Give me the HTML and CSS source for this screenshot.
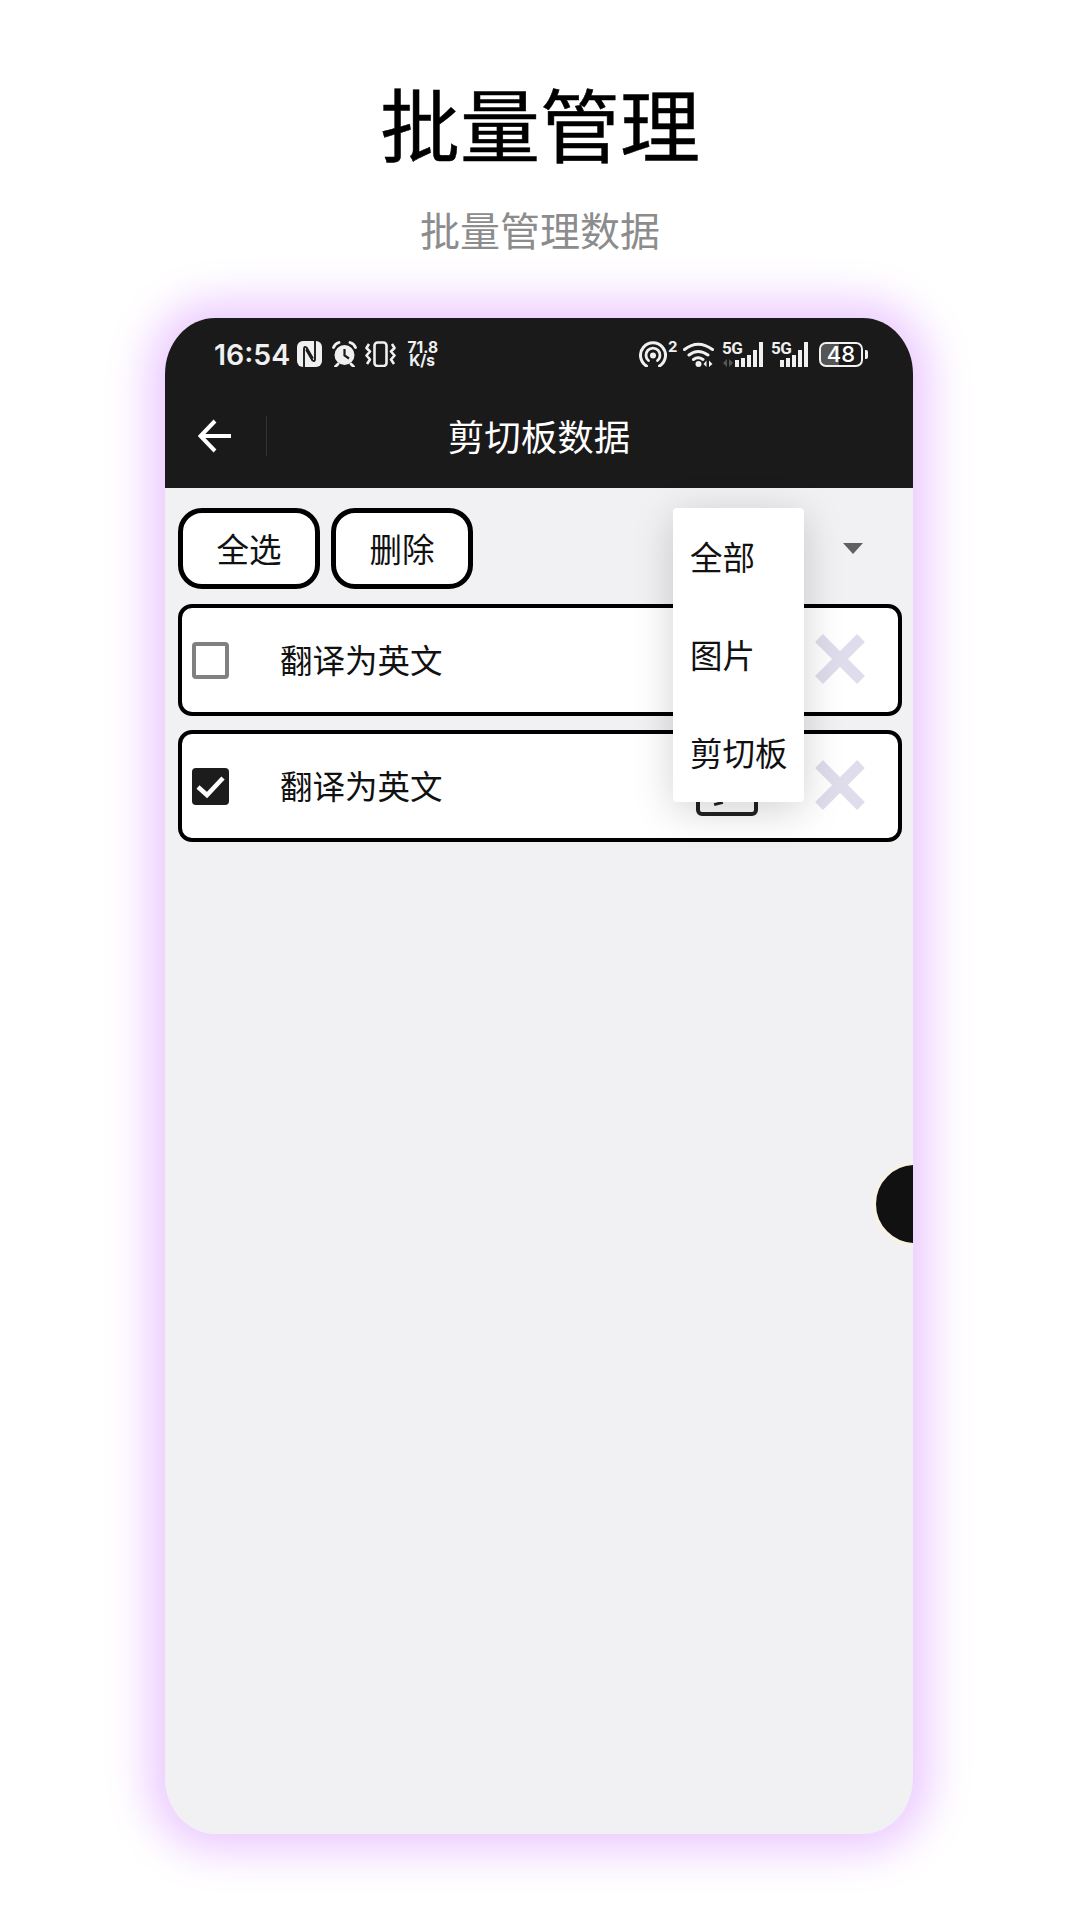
FILE: index.html
```html
<!DOCTYPE html>
<html lang="zh-CN">
<head>
<meta charset="utf-8">
<title>批量管理</title>
<link rel="stylesheet" href="styles.css">
</head>
<body>
<main class="page">
  <h1 class="headline">批量管理</h1>
  <p class="subhead">批量管理数据</p>
  <section class="phone">
    <header class="statusbar">
      <div class="status-group">
        <span class="clock">16:54</span>
        <svg class="ic ic-nfc" viewBox="0 0 25 26"><rect width="25" height="26" rx="6" fill="#f0f0f0"/><path d="M7 26V8Q7 5 9.500 6.500L16 17.500" fill="none" stroke="#1a1a1a" stroke-width="1.900"/><path d="M18 0V18Q18 21 15.500 19.500L9 8.500" fill="none" stroke="#1a1a1a" stroke-width="1.900"/></svg>
        <svg class="ic ic-alarm" viewBox="0 0 25 26"><circle cx="12.500" cy="14" r="10" fill="#f0f0f0"/><path d="M12.500 8V14.500L17 17.500" fill="none" stroke="#1a1a1a" stroke-width="2.200"/><path d="M1.500 6.500Q3 2.500 7 1.500M23.500 6.500Q22 2.500 18 1.500M6 23L3.500 25.500M19 23L21.500 25.500" fill="none" stroke="#f0f0f0" stroke-width="2.800" stroke-linecap="round"/></svg>
        <svg class="ic ic-vibrate" viewBox="0 0 31 26"><rect x="9.500" y="1.500" width="12" height="23.500" rx="3" fill="none" stroke="#f0f0f0" stroke-width="2.600"/><path d="M4 3L1.500 7L5 10.500L1.500 14.500L5 18.500L2 23M27 3L29.500 7L26 10.500L29.500 14.500L26 18.500L29 23" fill="none" stroke="#f0f0f0" stroke-width="2.600" stroke-linejoin="round"/></svg>
        <span class="speed"><span>71.8</span><span class="speed-unit">K/s</span></span>
      </div>
      <div class="status-group status-right">
        <svg class="ic ic-hotspot" viewBox="0 0 29 26"><path d="M7.500 25A12.500 12.500 0 1 1 20.500 25" fill="none" stroke="#f0f0f0" stroke-width="3" stroke-linecap="round"/><path d="M9.500 19.500A7 7 0 1 1 18.500 19.500" fill="none" stroke="#f0f0f0" stroke-width="2.800" stroke-linecap="round"/><circle cx="14" cy="14.500" r="3" fill="#f0f0f0"/></svg>
        <span class="sup">2</span>
        <svg class="ic ic-wifi" viewBox="0 0 32 26"><path d="M1.500 8.500Q15 -2 29.500 8.500M6 14Q15 7 25 14M10.500 18.500Q15 15 20 18.500" fill="none" stroke="#f0f0f0" stroke-width="3" stroke-linecap="round"/><circle cx="15.500" cy="23" r="3" fill="#f0f0f0"/><path d="M23.500 19.500V26L20.500 23ZM26 19.500V26L29.500 23Z" fill="#f0f0f0"/></svg>
        <span class="signal signal-a">
          <span class="fiveg">5G</span>
          <svg class="ic" viewBox="0 0 41 26"><path d="M5 18V26L1 22ZM7 18V26L11 22Z" fill="#555"/><rect x="13" y="19" width="4" height="7" fill="#f0f0f0"/><rect x="19" y="17" width="4" height="9" fill="#f0f0f0"/><rect x="25" y="14" width="4" height="12" fill="#f0f0f0"/><rect x="31" y="9" width="4" height="17" fill="#f0f0f0"/><rect x="37" y="1" width="4" height="25" fill="#f0f0f0"/></svg>
        </span>
        <span class="signal signal-b">
          <span class="fiveg">5G</span>
          <svg class="ic" viewBox="0 0 37 26"><rect x="9" y="19" width="4" height="7" fill="#f0f0f0"/><rect x="15" y="17" width="4" height="9" fill="#f0f0f0"/><rect x="21" y="14" width="4" height="12" fill="#f0f0f0"/><rect x="27" y="9" width="4" height="17" fill="#f0f0f0"/><rect x="33" y="1" width="4" height="25" fill="#f0f0f0"/></svg>
        </span>
        <span class="battery">48</span><span class="battery-tip"></span>
      </div>
    </header>
    <nav class="toolbar">
      <div class="toolbar-lead">
        <svg class="back" viewBox="0 0 34 34"><path d="M33 17H3M17 2L2.500 17L17 32" fill="none" stroke="#fff" stroke-width="4"/></svg>
        <span class="divider"></span>
      </div>
      <div class="toolbar-title">剪切板数据</div>
    </nav>
    <div class="content">
      <div class="actions">
        <button class="btn">全选</button>
        <button class="btn">删除</button>
        <span class="caret"></span>
      </div>
      <ul class="list">
        <li class="row">
          <span class="check"></span>
          <span class="row-text">翻译为英文</span>
          <span class="row-tool"></span>
          <svg class="close" viewBox="0 0 50 50"><path d="M4 4L46 46M46 4L4 46" stroke="#dfddeb" stroke-width="11"/></svg>
        </li>
        <li class="row">
          <span class="check checked"><svg viewBox="0 0 37 37"><path d="M6 19L15 27L31 10" fill="none" stroke="#fff" stroke-width="4.500"/></svg></span>
          <span class="row-text">翻译为英文</span>
          <span class="row-tool"></span>
          <svg class="close" viewBox="0 0 50 50"><path d="M4 4L46 46M46 4L4 46" stroke="#dfddeb" stroke-width="11"/></svg>
        </li>
      </ul>
      <div class="menu">
        <div class="menu-item">全部</div>
        <div class="menu-item">图片</div>
        <div class="menu-item">剪切板</div>
      </div>
      <div class="fab"></div>
    </div>
  </section>
</main>
</body>
</html>
```
FILE: styles.css
```css
* { box-sizing: border-box; }
html, body { margin: 0; padding: 0; background: #fff; }
body {
  width: 1080px;
  height: 1920px;
  overflow: hidden;
  font-family: "Noto Sans CJK SC", "Noto Sans", sans-serif;
}
.page { display: flex; flex-direction: column; align-items: center; }
.headline {
  margin: 62px 0 0;
  height: 118px;
  font-size: 80px;
  line-height: 118px;
  font-weight: 400;
  -webkit-text-stroke: 0.5px #000;
  color: #000;
}
.subhead {
  margin: 19px 0 0;
  height: 60px;
  font-size: 40px;
  line-height: 60px;
  color: #8c8c8c;
}
.phone {
  align-self: flex-start;
  margin: 59px 0 0 165px;
  width: 748px;
  height: 1516px;
  display: flex;
  flex-direction: column;
  border-radius: 50px / 56px;
  background: #f1f1f4;
  box-shadow: 0 0 44px 16px #ebc8ff;
  overflow: hidden;
}
.statusbar {
  height: 72px;
  flex: none;
  padding: 0 45px 0 49px;
  display: flex;
  align-items: center;
  justify-content: space-between;
  background: #1a1a1a;
  color: #f0f0f0;
  font-family: Inter, "Noto Sans", sans-serif;
}
.status-group { display: flex; align-items: center; }
.clock { font-size: 28.500px; font-weight: 600; letter-spacing: 0; width: 83px; white-space: nowrap; }
.ic { display: block; height: 26px; flex: none; }
.ic-nfc { width: 25px; }
.ic-alarm { width: 25px; margin-left: 10px; }
.ic-vibrate { width: 31px; margin-left: 8px; }
.speed {
  margin-left: 8px;
  width: 34px;
  display: flex;
  flex-direction: column;
  align-items: flex-end;
  font-size: 15.500px;
  line-height: 13px;
  font-weight: 700;
}
.speed-unit { margin-right: 3px; }
.ic-hotspot { width: 29px; }
.sup {
  width: 9px;
  align-self: flex-start;
  margin-top: -3px;
  font-size: 15px;
  line-height: 18px;
  font-weight: 700;
}
.ic-wifi { width: 32px; margin-left: 6px; }
.signal { position: relative; display: block; flex: none; }
.signal-a { width: 41px; margin-left: 7px; }
.signal-b { width: 37px; margin-left: 8px; }
.signal .ic { width: 100%; }
.fiveg {
  position: absolute;
  left: 0;
  top: -2px;
  font: 700 17px/18px Roboto, sans-serif;
  letter-spacing: -0.5px;
  color: #f0f0f0;
}
.battery {
  margin-left: 11px;
  width: 44px;
  height: 25px;
  border: 2px solid #f0f0f0;
  border-radius: 7px;
  background: linear-gradient(90deg, #555 46%, transparent 46%);
  font-size: 22px;
  font-weight: 500;
  line-height: 21px;
  text-align: center;
  color: #fff;
}
.battery-tip {
  margin-left: 2px;
  width: 3px;
  height: 9px;
  border-radius: 0 2px 2px 0;
  background: #f0f0f0;
}
.toolbar {
  height: 98px;
  flex: none;
  padding-bottom: 6px;
  display: grid;
  grid-template-columns: 102px 1fr 102px;
  align-items: center;
  background: #1a1a1a;
}
.toolbar-lead { display: flex; align-items: center; padding-left: 33px; }
.back { width: 34px; height: 34px; display: block; }
.divider { margin-left: 34px; width: 1px; height: 40px; background: #333; }
.toolbar-title {
  font-size: 36.500px;
  line-height: 50px;
  color: #fff;
  text-align: center;
}
.content { position: relative; flex: 1; padding: 20px 11px 0 13px; }
.actions { display: flex; align-items: center; gap: 11px; }
.btn {
  width: 142px;
  height: 81px;
  border: 5px solid #000;
  border-radius: 24px;
  background: #fff;
  font: 400 32.500px/44px "Noto Sans CJK SC", sans-serif;
  color: #111;
  padding: 0 0 2px;
}
.caret {
  margin-left: auto;
  margin-right: 39px;
  width: 0;
  height: 0;
  border-left: 10px solid transparent;
  border-right: 10px solid transparent;
  border-top: 11px solid #606060;
}
.list { margin: 15px 0 0; padding: 0; list-style: none; display: flex; flex-direction: column; gap: 14px; }
.row {
  height: 112px;
  padding: 0 33px 0 10px;
  display: flex;
  align-items: center;
  border: 4px solid #000;
  border-radius: 14px;
  background: #fff;
}
.check {
  width: 37px;
  height: 37px;
  flex: none;
  border: 4px solid #808080;
  border-radius: 4px;
  background: #fff;
}
.check.checked { border: 0; background: #1c1c1c; }
.check svg { display: block; width: 37px; height: 37px; }
.row-text {
  margin-left: 51px;
  font-size: 32.500px;
  line-height: 46px;
  color: #111;
  margin-top: -3px;
}
.row-tool {
  position: relative;
  margin-left: auto;
  width: 62px;
  height: 63px;
  flex: none;
  margin-top: -4px;
  border: 4px solid #222;
  border-radius: 6px;
}
.row-tool::after {
  content: "";
  position: absolute;
  left: 14px;
  bottom: 7px;
  width: 9px;
  height: 3px;
  background: #222;
  transform: rotate(-15deg);
}
.close { margin-left: 57px; width: 50px; height: 50px; flex: none; margin-top: -2px; }
.menu {
  position: absolute;
  left: 508px;
  top: 20px;
  width: 131px;
  background: #fff;
  border-radius: 4px;
  box-shadow: 0 8px 40px rgba(0, 0, 0, 0.18);
}
.menu-item {
  height: 98px;
  padding-left: 17px;
  font-size: 32.500px;
  line-height: 96px;
  color: #111;
  white-space: nowrap;
}
.fab {
  position: absolute;
  right: -45px;
  top: 673px;
  width: 86px;
  height: 86px;
  border: 4px solid #f8f2e6;
  border-radius: 50%;
  background: #111;
}
```
